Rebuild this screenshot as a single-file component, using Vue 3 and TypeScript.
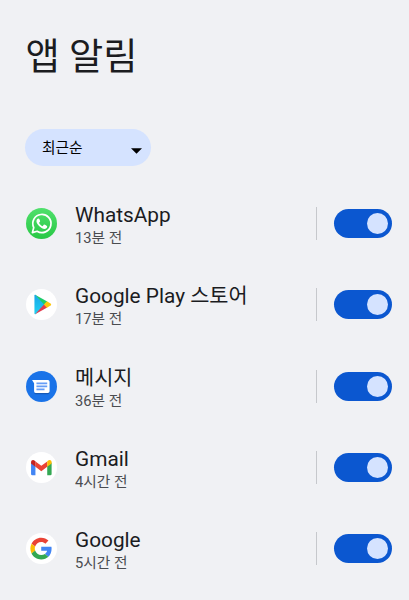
<script setup lang="ts">
import { ref } from 'vue'

interface AppItem {
  id: string
  name: string
  time: string
  enabled: boolean
}

const apps = ref<AppItem[]>([
  { id: 'whatsapp', name: 'WhatsApp', time: '13분 전', enabled: true },
  { id: 'play', name: 'Google Play 스토어', time: '17분 전', enabled: true },
  { id: 'messages', name: '메시지', time: '36분 전', enabled: true },
  { id: 'gmail', name: 'Gmail', time: '4시간 전', enabled: true },
  { id: 'google', name: 'Google', time: '5시간 전', enabled: true },
])
</script>

<template>
  <main class="page">
    <h1 class="title">앱 알림</h1>
    <button class="sort" type="button">
      <span class="sort-label">최근순</span>
      <svg class="caret" viewBox="0 0 12 6"><path d="M0 0h12L6 6z" /></svg>
    </button>
    <ul class="list">
      <li v-for="app in apps" :key="app.id" class="row">
        <svg v-if="app.id === 'whatsapp'" class="icon" viewBox="0 0 92 92">
          <defs>
            <linearGradient id="wa" x1="0" y1="0" x2="0" y2="1">
              <stop offset="0" stop-color="#50e06c" />
              <stop offset="1" stop-color="#28c845" />
            </linearGradient>
          </defs>
          <circle cx="46" cy="46" r="46" fill="url(#wa)" />
          <path d="M19 73l4-15a27 27 0 1 1 10 11z" fill="none" stroke="#fff" stroke-width="5" stroke-linejoin="round" />
          <path d="M37 31c-3 0-6 4-6 8 0 9 15 23 24 23 4 0 8-3 8-7 0-2-7-6-9-6s-3 5-5 5c-3 0-10-7-10-10 0-2 3-3 3-5s-3-8-5-8z" fill="#fff" />
        </svg>
        <svg v-else-if="app.id === 'play'" class="icon" viewBox="0 0 92 92">
          <defs>
            <linearGradient id="playblue" x1="0" y1="0" x2="0" y2="1">
              <stop offset="0" stop-color="#18a5e8" />
              <stop offset="1" stop-color="#20d3f2" />
            </linearGradient>
          </defs>
          <circle cx="46" cy="46" r="46" fill="#fff" />
          <path d="M25 19q0-3 3-2l29 29-29 29q-3 1-3-2z" fill="url(#playblue)" />
          <path d="M27 17l36 20-9 10z" fill="#1ccc6b" />
          <path d="M27 75l36-20-9-10z" fill="#e33b4e" />
          <path d="M62 36l11 7q4 3 0 6l-11 7-9-10z" fill="#fdc70c" />
        </svg>
        <svg v-else-if="app.id === 'messages'" class="icon" viewBox="0 0 92 92">
          <circle cx="46" cy="46" r="46" fill="#1a73e8" />
          <path d="M24 66q1 3 5 3h36q5 0 5-5V61z" fill="#1559b7" />
          <path d="M18 27h47q5 0 5 5v28q0 5-5 5H29q-5 0-5-5V36z" fill="#fff" />
          <path d="M31 36.500h32M31 45.500h32M31 54.500h24" stroke="#669df6" stroke-width="5" />
        </svg>
        <svg v-else-if="app.id === 'gmail'" class="icon" viewBox="0 0 92 92">
          <circle cx="46" cy="46" r="46" fill="#fff" />
          <path d="M15 31l13 10v28h-9q-4 0-4-4z" fill="#4285f4" />
          <path d="M76 31L63 41v28h9q4 0 4-4z" fill="#34a853" />
          <path d="M28 28l17.500 13L63 28v16L45.500 57 28 44z" fill="#ea4335" />
          <path d="M15 31c0-8 7-9 11-5l2 2v16L15 34z" fill="#c5221f" />
          <path d="M76 31c0-8-7-9-11-5l-2 2v16l13-10z" fill="#fbbc04" />
        </svg>
        <svg v-else class="icon" viewBox="0 0 92 92">
          <circle cx="46" cy="46" r="46" fill="#fff" />
          <g transform="translate(13 14) scale(1.340)">
            <path fill="#ea4335" d="M24 9.500c3.540 0 6.710 1.220 9.210 3.600l6.850-6.850C35.900 2.380 30.470 0 24 0 14.620 0 6.510 5.380 2.560 13.220l7.980 6.190C12.430 13.720 17.740 9.500 24 9.500z" />
            <path fill="#4285f4" d="M46.980 24.550c0-1.570-.15-3.090-.38-4.550H24v9.020h12.940c-.58 2.960-2.260 5.480-4.780 7.180l7.730 6c4.510-4.180 7.090-10.360 7.090-17.650z" />
            <path fill="#fbbc05" d="M10.530 28.590c-.48-1.450-.76-2.990-.76-4.590s.27-3.140.76-4.590l-7.980-6.190C.92 16.460 0 20.120 0 24s.92 7.540 2.560 10.780z" />
            <path fill="#34a853" d="M24 48c6.480 0 11.930-2.130 15.890-5.810l-7.730-6c-2.150 1.450-4.920 2.300-8.160 2.300-6.260 0-11.570-4.220-13.470-9.910l-7.980 6.190C6.510 42.620 14.620 48 24 48z" />
          </g>
        </svg>
        <div class="text">
          <span class="name">{{ app.name }}</span>
          <span class="time">{{ app.time }}</span>
        </div>
        <button
          class="switch"
          :class="{ on: app.enabled }"
          type="button"
          role="switch"
          :aria-checked="app.enabled"
          @click="app.enabled = !app.enabled"
        >
          <span class="knob"></span>
        </button>
      </li>
    </ul>
  </main>
</template>

<style>
body {
  background: #f0f1f4;
}
</style>

<style scoped>
.page {
  box-sizing: border-box;
  height: 600px;
  overflow: hidden;
  padding: 31px 17px 0 25px;
  background: #f0f1f4;
  color: #1b1c1f;
  font-family: Roboto, "Noto Sans CJK KR", sans-serif;
}
.title {
  margin: 0;
  padding-left: 0.500px;
  height: 52px;
  line-height: 52px;
  font-size: 37.200px;
  font-weight: 400;
}
.sort {
  display: flex;
  align-items: center;
  justify-content: space-between;
  box-sizing: border-box;
  width: 126px;
  height: 37px;
  margin: 46px 0 0;
  padding: 0 9px 0 17px;
  border: 0;
  border-radius: 19px;
  background: #d5e3ff;
  color: #000;
  font: inherit;
  font-size: 14.700px;
}
.sort-label {
  margin-bottom: 2px;
}
.caret {
  width: 11px;
  height: 6px;
  margin-top: 6px;
  fill: #000;
}
.list {
  margin: 16.700px 0 0;
  padding: 0;
  list-style: none;
}
.row {
  display: flex;
  align-items: center;
  height: 81.350px;
}
.icon {
  flex: none;
  width: 31px;
  height: 31px;
  margin-left: 1px;
}
.text {
  display: flex;
  flex: 1;
  flex-direction: column;
  margin-left: 18px;
  padding-top: 3px;
  white-space: nowrap;
}
.name {
  height: 26px;
  line-height: 26px;
  font-size: 20.800px;
}
.time {
  height: 20px;
  line-height: 20px;
  color: #4a4c50;
  font-size: 14.700px;
}
.switch {
  position: relative;
  display: flex;
  align-items: center;
  flex: none;
  box-sizing: border-box;
  width: 58px;
  height: 29px;
  padding: 4px;
  border: 0;
  border-radius: 15px;
  background: #74777f;
}
.switch::before {
  content: "";
  position: absolute;
  top: -2px;
  left: -18px;
  width: 1px;
  height: 33px;
  background: #c6c8cc;
}
.switch.on {
  justify-content: flex-end;
  background: #0b57d0;
}
.knob {
  width: 21px;
  height: 21px;
  border-radius: 50%;
  background: #d5e3ff;
}
</style>
